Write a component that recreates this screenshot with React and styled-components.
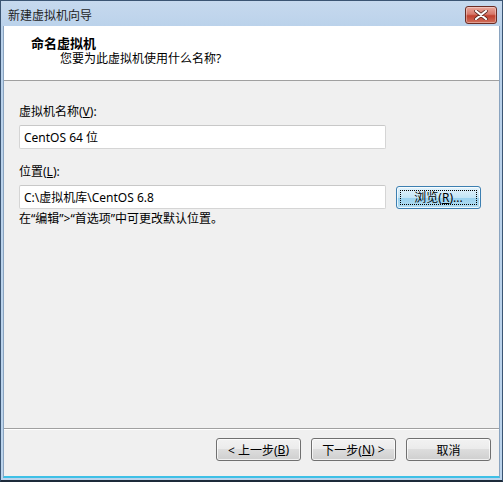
import styled, { createGlobalStyle } from "styled-components";

const GlobalStyle = createGlobalStyle`
  html, body { margin: 0; padding: 0; background: #ffffff; }
  body {
    font-family: "Noto Sans", "Noto Sans CJK SC", sans-serif;
    font-size: 12px;
    color: #000;
  }
`;

const Window = styled.div`
  width: 503px;
  height: 482px;
  box-sizing: border-box;
  border: 1px solid #3b5573;
  border-bottom: 2px solid #1d2b3a;
  background: linear-gradient(#c6d9ee, #b9d1ea 30px, #bcd4ec);
  display: flex;
  flex-direction: column;
  padding: 0 2px 2px 2px;
`;

const TitleBar = styled.div`
  height: 25px;
  display: flex;
  align-items: center;
  justify-content: space-between;
  padding-left: 5px;
  padding-right: 3px;
`;

const Title = styled.span`
  font-size: 12px;
  color: #1e1e1e;
  margin-top: 2px;
`;

const CloseButton = styled.div`
  width: 30px;
  height: 16px;
  margin-top: 2px;
  border: 1px solid #6b2c24;
  border-radius: 3px;
  background: linear-gradient(#e9a79b, #d7796b 45%, #c1412f 55%, #d0705c);
  display: flex;
  align-items: center;
  justify-content: center;
  box-shadow: inset 0 0 0 1px rgba(255, 255, 255, 0.35);
`;

const Client = styled.div`
  flex: 1;
  display: flex;
  flex-direction: column;
  background: #f0f0f0;
  border-left: 1px solid #8aa4c0;
  border-right: 1px solid #8aa4c0;
  border-bottom: 2px solid #3ec0e6;
`;

const Header = styled.div`
  height: 55px;
  box-sizing: border-box;
  background: #ffffff;
  border-bottom: 1px solid #a0a0a0;
  padding: 9px 0 0 27px;
`;

const HeaderTitle = styled.div`
  font-weight: bold;
  font-size: 13px;
  line-height: 16px;
`;

const HeaderSub = styled.div`
  padding-left: 29px;
  line-height: 16px;
`;

const Body = styled.div`
  flex: 1;
  padding: 23px 0 0 15px;
  display: flex;
  flex-direction: column;
`;

const Label = styled.div`
  line-height: 15px;
  margin-top: ${(p) => p.$top || 0}px;
`;

const Row = styled.div`
  display: flex;
  align-items: center;
  gap: 10px;
  margin-top: ${(p) => p.$top || 0}px;
`;

const TextBox = styled.div`
  width: 367px;
  height: 24px;
  box-sizing: border-box;
  border: 1px solid #d5d5d5;
  border-top-color: #c8c8c8;
  border-radius: 2px;
  background: #ffffff;
  padding-left: 4px;
  display: flex;
  align-items: center;
  font-size: 12px;
`;

const Button = styled.div`
  width: 85px;
  height: 23px;
  box-sizing: border-box;
  border: 1px solid ${(p) => (p.$focus ? "#3c7fb1" : "#707070")};
  border-radius: 3px;
  background: ${(p) =>
    p.$focus
      ? "linear-gradient(#e5f4fc, #c4e5f6 50%, #98d1ef 50%, #b6dff3)"
      : "linear-gradient(#f2f2f2, #ebebeb 50%, #dddddd 50%, #cfcfcf)"};
  box-shadow: inset 0 0 0 1px rgba(255, 255, 255, 0.7);
  display: flex;
  align-items: center;
  justify-content: center;
  position: relative;
  font-size: 12px;
`;

const FocusRing = styled.span`
  position: absolute;
  inset: 3px;
  border: 1px dotted #000;
`;

const Note = styled.div`
  line-height: 15px;
  margin-top: 2px;
`;

const Footer = styled.div`
  height: 38px;
  border-top: 1px solid #a0a0a0;
  box-shadow: inset 0 1px 0 #ffffff;
  display: flex;
  justify-content: flex-end;
  align-items: flex-start;
  gap: 10px;
  padding: 9px 8px 0 0;
`;

const Key = styled.u``;

export default function App() {
  return (
    <>
      <GlobalStyle />
      <Window>
        <TitleBar>
          <Title>新建虚拟机向导</Title>
          <CloseButton>
            <svg width="14" height="10" viewBox="0 0 14 10">
              <path
                d="M2 1 L12 9 M12 1 L2 9"
                stroke="#5a2a22"
                strokeWidth="3.6"
                strokeLinecap="round"
              />
              <path
                d="M2 1 L12 9 M12 1 L2 9"
                stroke="#ffffff"
                strokeWidth="2.2"
                strokeLinecap="round"
              />
            </svg>
          </CloseButton>
        </TitleBar>
        <Client>
          <Header>
            <HeaderTitle>命名虚拟机</HeaderTitle>
            <HeaderSub>您要为此虚拟机使用什么名称?</HeaderSub>
          </Header>
          <Body>
            <Label>
              虚拟机名称(<Key>V</Key>):
            </Label>
            <Row $top={6}>
              <TextBox>CentOS 64 位</TextBox>
            </Row>
            <Label $top={15}>
              位置(<Key>L</Key>):
            </Label>
            <Row $top={6}>
              <TextBox>C:\虚拟机库\CentOS 6.8</TextBox>
              <Button $focus>
                <FocusRing />
                浏览(<Key>R</Key>)...
              </Button>
            </Row>
            <Note>在“编辑”&gt;“首选项”中可更改默认位置。</Note>
          </Body>
          <Footer>
            <Button>
              &lt; 上一步(<Key>B</Key>)
            </Button>
            <Button>
              下一步(<Key>N</Key>) &gt;
            </Button>
            <Button>取消</Button>
          </Footer>
        </Client>
      </Window>
    </>
  );
}
